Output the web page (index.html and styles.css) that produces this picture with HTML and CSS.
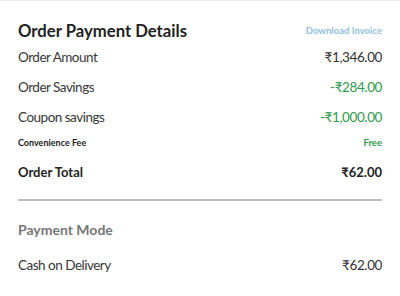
FILE: index.html
```html
<!DOCTYPE html>
<html lang="en">
<head>
<meta charset="utf-8">
<title>Order Payment Details</title>
<link rel="stylesheet" href="styles.css">
</head>
<body>
<div class="panel">
  <div class="head">
    <h2 class="title">Order Payment Details</h2>
    <a class="invoice" href="#">Download Invoice</a>
  </div>
  <div class="row">
    <span class="label">Order Amount</span>
    <span class="amount">₹1,346.00</span>
  </div>
  <div class="row">
    <span class="label">Order Savings</span>
    <span class="amount green">-₹284.00</span>
  </div>
  <div class="row">
    <span class="label">Coupon savings</span>
    <span class="amount green">-₹1,000.00</span>
  </div>
  <div class="row row-small">
    <span class="label small">Convenience Fee</span>
    <span class="amount small green">Free</span>
  </div>
  <div class="row row-total">
    <span class="label total">Order Total</span>
    <span class="amount total">₹62.00</span>
  </div>
  <hr class="divider">
  <div class="row">
    <span class="label section">Payment Mode</span>
  </div>
  <div class="row row-mode">
    <span class="label">Cash on Delivery</span>
    <span class="amount">₹62.00</span>
  </div>
</div>
</body>
</html>
```
FILE: styles.css
```css
html, body {
  margin: 0;
  padding: 0;
  background: #fff;
}

body {
  font-family: "Lato", "Noto Sans", sans-serif;
  color: #333;
  border-top: 1px solid #eeeeee;
}

.panel {
  padding: 0 18px;
}

.head {
  display: flex;
  justify-content: space-between;
  align-items: center;
  height: 23px;
  padding-top: 18px;
}

.title {
  margin: 0;
  font-size: 16.7px;
  font-weight: 700;
  color: #222;
}

.invoice {
  font-size: 9.5px;
  font-weight: 700;
  color: #8fc2dc;
  text-decoration: none;
}

.row {
  display: flex;
  justify-content: space-between;
  align-items: center;
  height: 30px;
}

.row-small {
  height: 20px;
}

.row-total {
  height: 40px;
}

.row-mode {
  margin-top: 6px;
}

.label {
  font-size: 13.5px;
  letter-spacing: -0.5px;
  color: #383838;
}

.amount {
  font-size: 13.5px;
  letter-spacing: -0.4px;
  color: #333;
}

.green {
  color: #2f9a4c;
}

.small {
  font-size: 9px;
  font-weight: 700;
  letter-spacing: 0;
}

.amount.small {
  font-size: 9.5px;
}

.label.small {
  color: #222;
}

.total {
  font-size: 13px;
  font-weight: 700;
  letter-spacing: 0;
  color: #222;
}

.section {
  font-size: 14px;
  font-weight: 700;
  letter-spacing: 0;
  color: #777;
}

.divider {
  margin: 7px 0 13px;
  border: 0;
  height: 2px;
  background: #bdbdbd;
}
```
